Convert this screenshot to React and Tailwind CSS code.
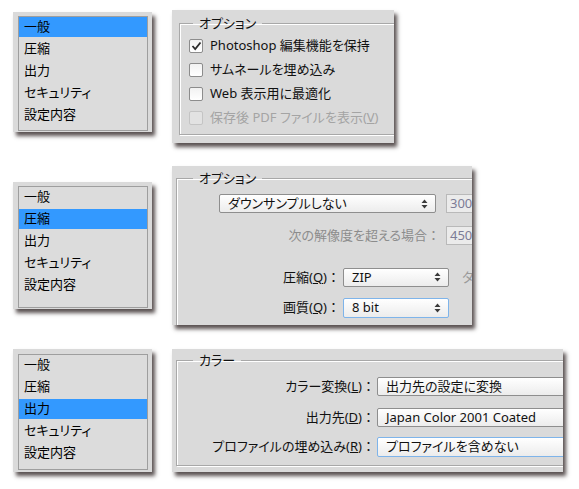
import React from 'react';

const ITEMS = ['一般', '圧縮', '出力', 'セキュリティ', '設定内容'];

const Arrows = () => (
  <svg width="7" height="10" viewBox="0 0 7 10" className="shrink-0">
    <path d="M0.5 4 L3.5 0.5 L6.5 4 Z M0.5 6 L3.5 9.5 L6.5 6 Z" fill="#3a3a3a" />
  </svg>
);

const SideList = ({ selected, outer, inner }) => (
  <div className={`w-[139px] shrink-0 bg-[#dadada] pl-[5px] pr-[4px] shadow-[3px_4px_4px_rgba(60,50,50,0.85)] ${outer}`}>
    <div className={`border border-[#9e9e9e] bg-[#dcdcdc] flex flex-col gap-[2px] ${inner}`}>
      {ITEMS.map((t, i) => (
        <div key={t} className={`h-[20px] flex items-center pl-[5px] text-[13px] text-black ${i === selected ? 'bg-[#3399ff]' : ''}`}>
          {t}
        </div>
      ))}
    </div>
  </div>
);

const Check = ({ checked, disabled, label }) => (
  <div className="h-[24px] flex items-center pl-[9px] gap-[7px]">
    <div className={`w-[14px] h-[14px] rounded-[2px] border flex items-center justify-center ${disabled ? 'border-[#c4c4c4] bg-[#e2e2e2]' : 'border-[#8c8c8c] bg-gradient-to-b from-[#f2f2f2] to-white'}`}>
      {checked && (
        <svg width="11" height="10" viewBox="0 0 11 10">
          <path d="M1.5 5 L4.2 8 L9.5 1.5" fill="none" stroke="#2b2b2b" strokeWidth="1.8" />
        </svg>
      )}
    </div>
    <span className={`text-[13px] ${disabled ? 'text-[#a4a4a4]' : 'text-[#111]'}`}>{label}</span>
  </div>
);

const Select = ({ value, focus, className }) => (
  <div className={`flex items-center justify-between pl-[8px] pr-[7px] rounded-[2px] border bg-gradient-to-b from-white to-[#ececec] text-[13px] text-[#111] ${focus ? 'border-[#7eb4ea]' : 'border-[#8e8e8e]'} ${className}`}>
    <span>{value}</span>
    <Arrows />
  </div>
);

const Field = ({ value }) => (
  <div className="w-[40px] h-[19px] shrink-0 border border-[#b9b9b9] bg-[#ebebeb] pl-[3px] flex items-center text-[13px] text-[#7c7c96]">
    {value}
  </div>
);

const Fieldset = ({ title, legendMl, className, children }) => (
  <fieldset className={`border border-[#a8a8a8] shadow-[inset_1px_1px_0_#fff,1px_1px_0_#fff] ${className}`}>
    <legend className={`px-[6px] text-[13px] leading-[14px] text-[#111] ${legendMl}`}>{title}</legend>
    {children}
  </fieldset>
);

const Colon = () => <span className="[font-feature-settings:normal]">：</span>;

const Key = ({ k }) => (
  <>
    (<span className="underline">{k}</span>)<Colon />
  </>
);

export default function App() {
  return (
    <div className="min-h-screen bg-white font-['Noto_Sans','Noto_Sans_CJK_JP',sans-serif] [font-feature-settings:'palt'] overflow-hidden">
      {/* 一般 */}
      <div className="flex items-start pt-[10px] pl-[13px] gap-[20px]">
        <SideList selected={0} outer="mt-[2px] pt-[4px] pb-[1px]" inner="h-[115px]" />
        <div className="w-[222px] h-[133px] shrink-0 bg-[#dadada] overflow-hidden pt-[6px] pl-[7px] shadow-[3px_4px_4px_rgba(60,50,50,0.85)]">
          <Fieldset title="オプション" legendMl="ml-[13px]" className="w-[260px] h-[119px]">
            <div className="pt-[4px] flex flex-col">
              <Check checked label="Photoshop 編集機能を保持" />
              <Check label="サムネールを埋め込み" />
              <Check label="Web 表示用に最適化" />
              <Check disabled label={<>保存後 PDF ファイルを表示(<span className="underline">V</span>)</>} />
            </div>
          </Fieldset>
        </div>
      </div>

      {/* 圧縮 */}
      <div className="flex items-start pl-[13px] gap-[20px] mt-[23px]">
        <SideList selected={1} outer="mt-[16px] pt-[4px] pb-[1px]" inner="h-[122px]" />
        <div className="w-[300px] h-[159px] shrink-0 bg-[#dadada] overflow-hidden pt-[5px] pl-[4px] shadow-[3px_4px_4px_rgba(60,50,50,0.85)]">
          <Fieldset title="オプション" legendMl="ml-[16px]" className="w-[330px] h-[200px]">
            <div className="flex flex-col">
              <div className="flex items-center mt-[9px] pl-[42px] gap-[10px]">
                <Select value="ダウンサンプルしない" className="w-[217px] h-[19px]" />
                <Field value="300" />
              </div>
              <div className="flex items-center mt-[13px]">
                <div className="w-[263px] text-right text-[13px] text-[#8c8c8c]">次の解像度を超える場合<Colon /></div>
                <div className="ml-[6px]"><Field value="450" /></div>
              </div>
              <div className="flex items-center mt-[22px]">
                <div className="w-[163px] text-right text-[13px] text-[#111]">圧縮<Key k="Q" /></div>
                <Select value="ZIP" className="ml-[3px] w-[106px] h-[19px]" />
                <span className="ml-[13px] text-[13px] text-[#9a9a9a]">タ</span>
              </div>
              <div className="flex items-center mt-[11px]">
                <div className="w-[163px] text-right text-[13px] text-[#111]">画質<Key k="Q" /></div>
                <Select value="8 bit" focus className="ml-[3px] w-[106px] h-[20px]" />
              </div>
            </div>
          </Fieldset>
        </div>
      </div>

      {/* 出力 */}
      <div className="flex items-start pl-[13px] gap-[20px] mt-[24px]">
        <SideList selected={2} outer="pt-[5px] pb-[2px]" inner="h-[116px]" />
        <div className="w-[391px] h-[123px] shrink-0 bg-[#dadada] overflow-hidden pt-[4px] pl-[4px] shadow-[3px_4px_4px_rgba(60,50,50,0.85)]">
          <Fieldset title="カラー" legendMl="ml-[16px]" className="w-[420px] h-[113px]">
            <div className="flex flex-col">
              <div className="flex items-center mt-[10px]">
                <div className="w-[198px] text-right text-[13px] text-[#111]">カラー変換<Key k="L" /></div>
                <Select value="出力先の設定に変換" className="ml-[2px] w-[260px] h-[19px]" />
              </div>
              <div className="flex items-center mt-[11px]">
                <div className="w-[198px] text-right text-[13px] text-[#111]">出力先<Key k="D" /></div>
                <Select value="Japan Color 2001 Coated" className="ml-[2px] w-[260px] h-[19px]" />
              </div>
              <div className="flex items-center mt-[10px]">
                <div className="w-[198px] text-right text-[13px] text-[#111]">プロファイルの埋め込み<Key k="R" /></div>
                <Select value="プロファイルを含めない" focus className="ml-[2px] w-[260px] h-[20px]" />
              </div>
            </div>
          </Fieldset>
        </div>
      </div>
    </div>
  );
}
